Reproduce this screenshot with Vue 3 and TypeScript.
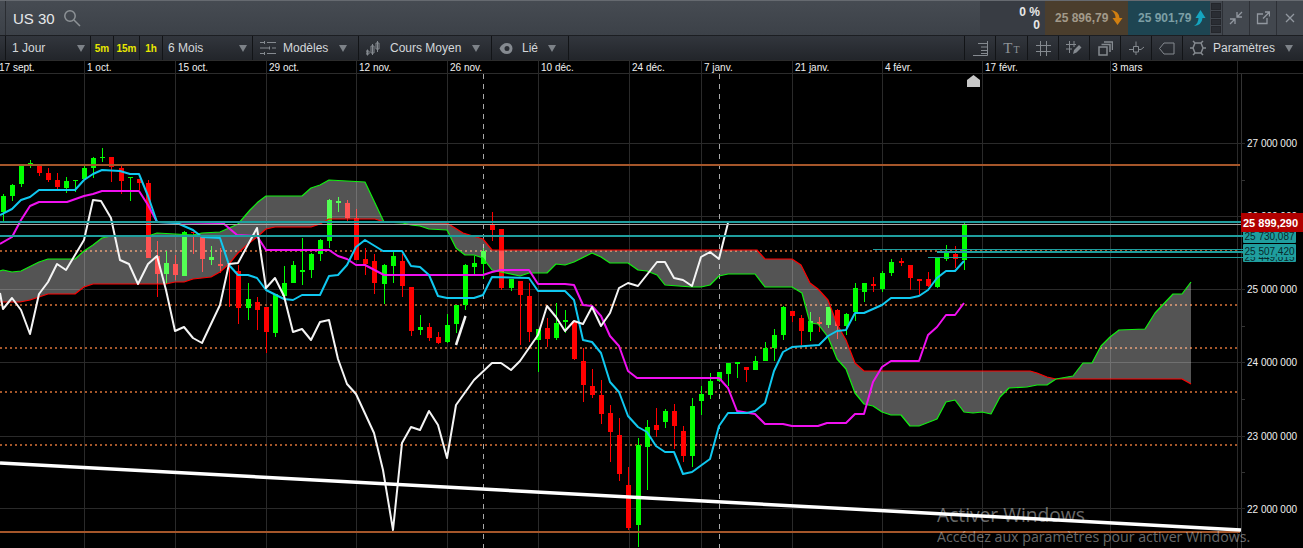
<script setup lang="ts">
type Pt = [number, number]
// x, body top, body bottom, wick top, wick bottom, colour
type Candle = [number, number, number, number, number, 'g' | 'r']

const pts = (list: Pt[]) => list.map((p) => p.join(',')).join(' ')

const candles: Candle[] = [
  [3, 196, 212, 194, 221, 'g'], [12, 185, 196, 184, 201, 'g'], [21, 166, 184, 165, 187, 'g'], [30, 163, 164, 160, 168, 'g'],
  [39, 166, 173, 165, 176, 'r'], [48, 173, 180, 168, 182, 'r'], [57, 180, 187, 173, 189, 'r'], [66, 181, 188, 177, 193, 'g'],
  [75, 180, 181, 180, 192, 'g'], [84, 168, 179, 166, 180, 'g'], [93, 158, 168, 157, 178, 'g'], [102, 157, 158, 148, 162, 'g'],
  [111, 157, 167, 157, 182, 'r'], [121, 168, 181, 166, 194, 'r'], [130, 177, 178, 177, 201, 'g'], [139, 179, 183, 179, 190, 'r'],
  [148, 183, 258, 180, 258, 'r'], [157, 256, 274, 241, 297, 'r'], [166, 263, 274, 251, 284, 'g'], [175, 264, 275, 255, 280, 'r'],
  [184, 232, 276, 231, 276, 'g'], [193, 232, 233, 232, 254, 'r'], [202, 237, 259, 236, 272, 'r'], [211, 257, 260, 246, 265, 'g'],
  [220, 264, 266, 248, 273, 'r'], [229, 263, 264, 263, 307, 'r'], [238, 271, 308, 265, 324, 'r'], [248, 299, 308, 283, 320, 'g'],
  [257, 302, 310, 297, 330, 'r'], [266, 307, 332, 307, 353, 'r'], [275, 294, 333, 294, 337, 'g'], [284, 283, 296, 266, 296, 'g'],
  [293, 265, 283, 261, 283, 'g'], [302, 270, 272, 238, 285, 'g'], [311, 254, 270, 253, 278, 'g'], [320, 240, 254, 239, 261, 'g'],
  [329, 200, 241, 199, 248, 'g'], [338, 201, 203, 197, 212, 'g'], [347, 203, 218, 200, 223, 'r'], [356, 218, 260, 209, 260, 'r'],
  [365, 259, 264, 248, 275, 'r'], [374, 261, 283, 254, 294, 'r'], [384, 265, 284, 264, 304, 'g'], [393, 256, 266, 250, 283, 'g'],
  [402, 261, 286, 254, 297, 'r'], [411, 287, 331, 287, 336, 'r'], [420, 327, 330, 315, 335, 'g'], [429, 327, 338, 323, 341, 'r'],
  [438, 337, 343, 332, 344, 'r'], [447, 325, 342, 314, 343, 'g'], [456, 305, 324, 305, 333, 'g'], [465, 265, 305, 264, 310, 'g'],
  [474, 263, 267, 256, 274, 'g'], [483, 251, 264, 248, 279, 'g'], [492, 225, 230, 212, 241, 'r'], [501, 229, 288, 229, 290, 'r'],
  [511, 279, 288, 279, 291, 'g'], [520, 281, 295, 281, 345, 'r'], [529, 296, 332, 283, 342, 'r'], [538, 329, 340, 329, 372, 'g'],
  [547, 328, 339, 318, 347, 'r'], [556, 323, 338, 303, 340, 'g'], [565, 320, 322, 310, 333, 'g'], [574, 321, 359, 321, 360, 'r'],
  [583, 361, 385, 348, 402, 'r'], [592, 386, 395, 369, 398, 'r'], [601, 395, 414, 380, 424, 'r'], [610, 413, 432, 405, 462, 'r'],
  [619, 435, 474, 418, 481, 'r'], [628, 485, 528, 467, 530, 'r'], [638, 445, 525, 438, 547, 'g'], [647, 427, 447, 420, 490, 'g'],
  [656, 425, 430, 408, 437, 'r'], [665, 411, 422, 409, 428, 'g'], [674, 411, 426, 404, 449, 'r'], [683, 431, 456, 426, 462, 'r'],
  [692, 406, 456, 398, 467, 'g'], [701, 394, 401, 386, 415, 'g'], [710, 381, 395, 373, 399, 'g'], [719, 372, 381, 372, 382, 'g'],
  [728, 363, 374, 363, 386, 'g'], [737, 362, 364, 362, 378, 'g'], [746, 367, 370, 367, 382, 'r'], [755, 361, 370, 356, 370, 'g'],
  [765, 348, 361, 342, 361, 'g'], [774, 335, 348, 329, 361, 'g'], [783, 307, 335, 306, 340, 'g'], [792, 311, 316, 311, 322, 'r'],
  [801, 318, 331, 315, 345, 'r'], [810, 321, 332, 312, 341, 'g'], [819, 322, 324, 317, 332, 'r'], [828, 307, 325, 307, 328, 'g'],
  [837, 310, 326, 309, 339, 'r'], [846, 314, 326, 313, 335, 'g'], [855, 288, 312, 283, 321, 'g'], [864, 283, 292, 283, 302, 'g'],
  [873, 284, 286, 277, 292, 'r'], [882, 273, 289, 271, 292, 'g'], [891, 262, 273, 259, 276, 'g'], [901, 261, 263, 258, 266, 'r'],
  [910, 265, 278, 265, 290, 'r'], [919, 279, 281, 279, 295, 'r'], [928, 279, 286, 272, 287, 'r'], [937, 258, 287, 258, 288, 'g'],
  [946, 252, 259, 245, 261, 'g'], [955, 254, 259, 246, 268, 'r'], [964, 225, 260, 223, 270, 'g']
]

const green: Pt[] = [
  [0, 271], [3, 270], [12, 272], [21, 271], [39, 262], [48, 259], [75, 259], [84, 251], [93, 245], [102, 238], [111, 236], [148, 236],
  [157, 233], [175, 234], [193, 235], [202, 233], [220, 232], [229, 228], [238, 224], [250, 210], [258, 202], [266, 196], [302, 196],
  [311, 188], [320, 185], [329, 180], [365, 182], [384, 222], [403, 223], [411, 225], [420, 226], [429, 229], [447, 230], [456, 248],
  [465, 255], [474, 255], [483, 258], [492, 270], [501, 272], [520, 276], [529, 273], [547, 273], [556, 264], [565, 265], [574, 262],
  [592, 253], [601, 257], [610, 263], [628, 263], [638, 270], [647, 271], [657, 275], [665, 285], [692, 287], [701, 287], [710, 285],
  [719, 276], [728, 274], [755, 274], [765, 287], [792, 287], [802, 293], [810, 323], [818, 324], [828, 337], [837, 359], [846, 369],
  [855, 393], [864, 404], [873, 406], [882, 412], [891, 415], [901, 415], [910, 426], [919, 426], [937, 419], [946, 402], [955, 400],
  [964, 412], [973, 413], [982, 412], [991, 414], [1000, 397], [1009, 388], [1027, 387], [1037, 385], [1047, 385], [1056, 379],
  [1073, 376], [1083, 363], [1092, 363], [1101, 346], [1110, 337], [1119, 330], [1145, 329], [1155, 313], [1173, 294], [1182, 294], [1191, 282]
]

const red: Pt[] = [
  [0, 302], [20, 302], [30, 300], [39, 297], [48, 294], [75, 294], [84, 287], [93, 284], [166, 284], [175, 282], [184, 282], [193, 279],
  [211, 277], [220, 272], [229, 264], [238, 253], [248, 244], [257, 237], [266, 229], [275, 227], [311, 227], [320, 224], [329, 219],
  [375, 219], [384, 222], [447, 223], [463, 233], [483, 239], [492, 250], [757, 250], [765, 259], [792, 259], [801, 265], [810, 283],
  [818, 289], [828, 300], [837, 324], [846, 340], [855, 363], [864, 371], [1030, 371], [1037, 373], [1047, 377], [1056, 379], [1182, 379], [1191, 384]
]

const cloud = pts([...green, ...[...red].reverse()])

const cyan: Pt[] = [
  [0, 215], [12, 209], [21, 200], [30, 197], [39, 190], [75, 190], [84, 180], [93, 174], [102, 170], [120, 171], [130, 174], [139, 174],
  [148, 196], [157, 222], [177, 223], [193, 230], [202, 237], [220, 238], [229, 265], [238, 275], [248, 275], [257, 278], [266, 290],
  [284, 299], [293, 300], [302, 295], [320, 295], [329, 276], [338, 275], [347, 265], [356, 247], [365, 240], [383, 251], [402, 251],
  [411, 266], [420, 267], [429, 275], [438, 296], [447, 298], [474, 298], [483, 295], [492, 277], [529, 278], [538, 291], [565, 291],
  [574, 300], [583, 340], [592, 342], [601, 353], [610, 382], [619, 392], [628, 416], [638, 427], [647, 432], [656, 446], [665, 452],
  [674, 452], [683, 474], [692, 472], [710, 459], [719, 426], [728, 413], [747, 413], [755, 411], [765, 403], [774, 371], [783, 352],
  [792, 347], [819, 345], [828, 336], [837, 331], [846, 330], [855, 313], [864, 313], [882, 305], [891, 298], [910, 298], [919, 296],
  [928, 290], [937, 278], [946, 271], [955, 271], [964, 261]
]

const magenta: Pt[] = [
  [0, 244], [12, 237], [21, 220], [30, 206], [39, 202], [67, 202], [84, 196], [93, 194], [102, 191], [139, 191], [148, 205], [157, 222],
  [223, 223], [237, 235], [257, 236], [266, 250], [329, 250], [338, 256], [347, 259], [356, 265], [365, 265], [384, 275], [483, 275],
  [492, 272], [501, 270], [529, 270], [538, 284], [565, 284], [574, 285], [583, 305], [592, 306], [601, 316], [610, 336], [619, 346],
  [628, 371], [637, 378], [719, 378], [728, 388], [737, 411], [755, 414], [765, 424], [783, 424], [792, 426], [818, 426], [827, 423],
  [846, 423], [855, 414], [864, 414], [873, 382], [882, 367], [891, 361], [919, 361], [928, 335], [937, 327], [946, 315], [955, 315], [964, 303]
]

const white: Pt[] = [
  [0, 293], [3, 309], [12, 298], [21, 310], [30, 334], [39, 294], [48, 282], [57, 264], [66, 270], [75, 255], [84, 240], [93, 200],
  [101, 201], [111, 218], [120, 260], [129, 264], [138, 284], [148, 264], [157, 256], [166, 290], [175, 331], [184, 327], [193, 338],
  [202, 343], [220, 305], [229, 264], [238, 263], [257, 228], [266, 288], [275, 278], [284, 296], [293, 332], [302, 329], [311, 340],
  [320, 322], [329, 320], [338, 359], [347, 384], [356, 394], [374, 433], [383, 470], [393, 530], [402, 443], [411, 427], [420, 430],
  [429, 411], [438, 425], [447, 458], [456, 405], [474, 380], [492, 363], [501, 363], [511, 370], [520, 361], [538, 335], [547, 306],
  [556, 317], [565, 331], [574, 321], [583, 324], [592, 307], [601, 326], [610, 313], [619, 288], [628, 283], [638, 286], [657, 262],
  [665, 262], [674, 278], [683, 280], [692, 286], [701, 257], [710, 252], [719, 259], [728, 223]
]

const gridX = [84.5, 175.5, 266.5, 356.5, 447.5, 538.5, 629.5, 701.5, 792.5, 882.5, 982.5, 1110.5, 1237.5]
const gridY = [143.5, 216.5, 289.5, 362.5, 436.5, 508.5]
const dotted = [251, 305, 348, 392, 445]
const minorTicks = [180, 253, 326, 399, 472]

const dates = [
  { x: -1, t: '17 sept.' }, { x: 87, t: '1 oct.' }, { x: 178, t: '15 oct.' }, { x: 269, t: '29 oct.' }, { x: 359, t: '12 nov.' },
  { x: 450, t: '26 nov.' }, { x: 541, t: '10 déc.' }, { x: 632, t: '24 déc.' }, { x: 704, t: '7 janv.' }, { x: 795, t: '21 janv.' },
  { x: 885, t: '4 févr.' }, { x: 985, t: '17 févr.' }, { x: 1112, t: '3 mars' }
]

const prices = [
  { y: 143, t: '27 000 000' }, { y: 216, t: '26 000 000' }, { y: 289, t: '25 000 000' },
  { y: 362, t: '24 000 000' }, { y: 436, t: '23 000 000' }, { y: 509, t: '22 000 000' }
]

// order matters, the middle label covers the other two
const tealLabels = [
  { y: 229, h: 14, ty: 240, t: '25 730,087' },
  { y: 250, h: 12, ty: 261, t: '25 449,815' },
  { y: 244, h: 13, ty: 255, t: '25 507,420' }
]
</script>

<template>
  <div class="page">
    <header class="top">
      <div class="symbol">
        <span class="name">US 30</span>
        <svg class="search" width="18" height="18" viewBox="0 0 18 18">
          <circle cx="7" cy="7" r="5.2" />
          <path d="M11 11l6 6" />
        </svg>
      </div>
      <div class="change">
        <span>0 %</span>
        <span>0</span>
      </div>
      <div class="quote sell">
        <span>25 896,79</span>
        <svg width="12" height="16" viewBox="0 0 12 16">
          <path d="M0 0Q8 1 8.500 8L11.500 8L6.500 15L1.500 8L4.500 8Q4.500 3 0 0Z" />
        </svg>
      </div>
      <div class="quote buy">
        <span>25 901,79</span>
        <svg width="12" height="16" viewBox="0 0 12 16">
          <path d="M0 16Q8 15 8.500 8L11.500 8L6.500 0L1.500 8L4.500 8Q4.500 13 0 16Z" />
        </svg>
      </div>
      <div class="depth"><i></i><i></i><i></i><i></i></div>
      <button class="win">
        <svg width="14" height="14" viewBox="0 0 14 14">
          <path d="M8 1v5h5M8 6l5-5M1 8h5v5M6 8l-5 5" />
        </svg>
      </button>
      <button class="win">
        <svg width="14" height="14" viewBox="0 0 14 14">
          <path d="M7 3H1.500v9.500H11V7M7 7.500L13 1.500M9 1h4.500v4.500" />
        </svg>
      </button>
      <button class="win">
        <svg width="12" height="12" viewBox="0 0 12 12">
          <path d="M2 2l8 8M10 2l-8 8" />
        </svg>
      </button>
    </header>

    <nav class="bar">
      <div class="group">
        <div class="cell w85"><span>1 Jour</span><b class="caret"></b></div>
        <div class="cell fast w23">5m</div>
        <div class="cell fast w26">15m</div>
        <div class="cell fast w23">1h</div>
        <div class="cell w90"><span>6 Mois</span><b class="caret"></b></div>
        <div class="cell w106">
          <svg class="ico" width="16" height="14" viewBox="0 0 16 14">
            <path d="M0 1.500h4M7 1.500h9M4.500 0v3M0 7h9M12 7h4M9.500 5.500v3M0 12.500h4M7 12.500h9M4.500 11v3" />
          </svg>
          <span class="gap7">Modèles</span><b class="caret"></b>
        </div>
        <div class="cell w133">
          <svg class="ico" width="14" height="15" viewBox="0 0 14 15">
            <path d="M1.500 8.500v6M0 10h3v3H0zM6.500 3v11M5 5h3v7H5zM11.500 0v11M10 2h3v6h-3z" />
          </svg>
          <span class="gap10">Cours Moyen</span><b class="caret"></b>
        </div>
        <div class="cell w78">
          <svg width="15" height="13" viewBox="0 0 15 13">
            <path class="eye" d="M0.500 6.500Q3 1 8 1A5.500 5.500 0 1 1 8 12Q3 12 0.500 6.500ZM8 4A2.500 2.500 0 1 0 8 9A2.500 2.500 0 1 0 8 4Z" />
          </svg>
          <span class="gap8">Lié</span><b class="caret"></b>
        </div>
      </div>
      <div class="group">
        <div class="cell w31 tool">
          <svg class="ico" width="15" height="15" viewBox="0 0 15 15">
            <path d="M14.500 0v14.500H0M5 2.500h9M8 6h6M8 9.500h6M8 12.500h6" />
          </svg>
        </div>
        <div class="cell w32 tool tt"><span class="big">T</span><span class="small">T</span></div>
        <div class="cell w31 tool">
          <svg class="ico" width="15" height="15" viewBox="0 0 15 15">
            <path d="M4.500 0v15M10.500 0v15M0 4.500h15M0 10.500h15" />
          </svg>
        </div>
        <div class="cell w31 tool">
          <svg class="ico" width="16" height="15" viewBox="0 0 16 15">
            <path d="M3.500 0v12M8 0v6M0 3.500h10M0 8h6" />
            <path class="solid" d="M8 9l5-5 2.500 2.500-5 5zM7 13l1-4 2.500 2.500z" />
          </svg>
        </div>
        <div class="cell w31 tool">
          <svg class="ico thick" width="15" height="15" viewBox="0 0 15 15">
            <path d="M1 6h8v8H1zM3.500 3.500H12V11M6 1h8.500v8" />
          </svg>
        </div>
        <div class="cell w31 tool">
          <svg class="ico" width="15" height="14" viewBox="0 0 15 14">
            <path d="M0 8.500h4M9 8.500h3L15 6M7 0.500v5M7 11v3M4.500 5.500h5v5.500h-5z" />
          </svg>
        </div>
        <div class="cell w31 tool">
          <svg class="ico" width="16" height="13" viewBox="0 0 16 13">
            <path d="M15 1H5L0.500 6.500 5 12h10z" />
          </svg>
        </div>
        <div class="cell w121">
          <svg class="ico thick" width="16" height="16" viewBox="0 0 16 16">
            <path d="M5 3h6l2 5-2 5H5L3 8zM5 3L3 1M11 3l2-2M13 8h3M3 8H0M5 13l-2 2M11 13l2 2" />
          </svg>
          <span class="gap7">Paramètres</span><b class="caret"></b>
        </div>
      </div>
    </nav>

    <svg class="chart" width="1303" height="488" viewBox="0 60 1303 488">
      <rect x="0" y="60" width="1303" height="488" fill="#000" />
      <path d="M0 60.500H1303M0 73.500H1303" stroke="#2c2c2c" />

      <line v-for="x in gridX" :key="x" :x1="x" :x2="x" y1="60" y2="548" stroke="#2a2a2a" />
      <line x1="1241.500" x2="1241.500" y1="74" y2="548" stroke="#333" />
      <line v-for="y in gridY" :key="y" x1="0" x2="1245" :y1="y" :y2="y" stroke="#2a2a2a" />
      <line v-for="y in minorTicks" :key="y" x1="1241" x2="1245" :y1="y + 0.5" :y2="y + 0.5" stroke="#333" />

      <line v-for="y in dotted" :key="y" x1="0" x2="1240" :y1="y" :y2="y" class="dots" />
      <line x1="483.500" x2="483.500" y1="74" y2="548" class="dash" />
      <line x1="719.500" x2="719.500" y1="74" y2="548" class="dash" />

      <g v-for="c in candles" :key="c[0]" :fill="c[5] === 'g' ? '#00ff00' : '#ff0000'">
        <rect :x="c[0]" :y="c[3]" width="1" :height="c[4] - c[3]" />
        <rect :x="c[0] - 2" :y="c[1]" width="5" :height="c[2] - c[1]" />
      </g>

      <polygon :points="cloud" fill="rgba(255,255,255,0.33)" />
      <polyline :points="pts(red)" class="line" stroke="#ff0000" stroke-width="1.200" />
      <polyline :points="pts(green)" class="line" stroke="#10f010" stroke-width="1.200" />
      <polyline :points="pts(magenta)" class="line" stroke="#f010f0" stroke-width="2" />
      <polyline :points="pts(cyan)" class="line" stroke="#10c8f0" stroke-width="2" />
      <polyline :points="pts(white)" class="line" stroke="#f4f4f4" stroke-width="2" />
      <line x1="456" y1="345" x2="465.500" y2="316" stroke="#f4f4f4" stroke-width="2.500" />

      <rect x="0" y="164" width="1240" height="2" fill="#a5562a" />
      <rect x="0" y="531" width="1240" height="2" fill="#a5562a" />
      <line x1="0" y1="463" x2="1241" y2="530" stroke="#fff" stroke-width="3.500" />

      <rect x="0" y="221" width="1243" height="2" fill="#1f9e9e" />
      <rect x="0" y="224" width="1243" height="1" fill="#aaa" />
      <rect x="0" y="235" width="1243" height="2" fill="#1f9e9e" />
      <rect x="873" y="249" width="370" height="1" fill="#1f9e9e" />
      <rect x="937" y="251" width="306" height="2" fill="#1f9e9e" />
      <rect x="928" y="257" width="315" height="1" fill="#1f9e9e" />

      <polygon points="967,87 967,80 973.500,75 980,80 980,87" fill="#c8c8c8" />

      <text v-for="d in dates" :key="d.t" :x="d.x" y="71" class="date">{{ d.t }}</text>
      <text v-for="p in prices" :key="p.y" x="1247" :y="p.y + 4" class="price">{{ p.t }}</text>

      <g v-for="l in tealLabels" :key="l.t">
        <rect x="1243" :y="l.y" width="53" :height="l.h" rx="1" fill="#1f9e9e" />
        <text x="1244.500" :y="l.ty" class="teal">{{ l.t }}</text>
      </g>
      <rect x="1241" y="213" width="62" height="19" fill="#b00000" />
      <text x="1243" y="227" class="last">25 899,290</text>
    </svg>

    <div class="activate">
      <div class="title">Activer Windows</div>
      <div class="hint">Accédez aux paramètres pour activer Windows.</div>
    </div>
  </div>
</template>

<style scoped>
.page {
  position: relative;
  width: 1303px;
  height: 548px;
  overflow: hidden;
  background: #000;
  font-family: "Liberation Sans", Arial, sans-serif;
}

.top {
  display: flex;
  box-sizing: content-box;
  height: 34px;
  border-top: 1px solid #666a70;
  border-bottom: 1px solid #1c1e22;
  background: linear-gradient(#464b52, #3c4148);
}

.symbol {
  flex: 1;
  display: flex;
  align-items: center;
  margin-left: 5px;
  padding-left: 7px;
  border-left: 1px solid #2a2d32;
  color: #e6e8ea;
  font-size: 15px;
}

.search {
  margin-left: 8px;
  fill: none;
  stroke: #8d9296;
  stroke-width: 1.500;
}

.change {
  width: 60px;
  padding: 1px 5px 0 0;
  display: flex;
  flex-direction: column;
  justify-content: center;
  align-items: flex-end;
  background: #383c43;
  color: #e8e8e8;
  font-size: 12px;
  font-weight: bold;
  line-height: 13px;
}

.quote {
  display: flex;
  align-items: center;
  gap: 3px;
  font-size: 12px;
  font-weight: bold;
  box-sizing: border-box;
  padding-left: 10px;
}

.sell {
  width: 83px;
  background: #4b3e2d;
  color: #a29a8a;
  fill: #d17f10;
}

.buy {
  width: 82px;
  background: #1e4552;
  color: #7c9fa5;
  fill: #15a5c0;
}

.depth {
  width: 12px;
  padding: 2px 1px;
  box-sizing: border-box;
  display: flex;
  flex-direction: column;
  gap: 1px;
  background: #42474e;
}

.depth i {
  flex: 1;
  background: #2a2d33;
  border: 1px solid #24262b;
}

.win {
  width: 27px;
  padding: 0;
  border: 0;
  border-left: 1px solid #2d3036;
  background: #42474e;
  display: flex;
  align-items: center;
  justify-content: center;
}

.win svg {
  fill: none;
  stroke: #9298a0;
  stroke-width: 1.300;
}

.bar {
  display: flex;
  justify-content: space-between;
  height: 24px;
  padding-left: 5px;
  background: linear-gradient(#32363d, #22252a);
  color: #d4d7da;
  font-size: 12px;
}

.group {
  display: flex;
}

.cell {
  box-sizing: border-box;
  display: flex;
  align-items: center;
  padding: 0 8px 0 7px;
  border-left: 1px solid #121417;
}

.group:first-child .cell:last-child {
  border-right: 1px solid #121417;
}

.w23 { width: 23px; }
.w26 { width: 26px; }
.w31 { width: 31px; }
.w32 { width: 32px; }
.w78 { width: 78px; padding-right: 12px; }
.w85 { width: 85px; padding: 0 5px 0 6px; }
.w90 { width: 90px; padding: 0 5px; }
.w106 { width: 106px; padding-right: 11px; }
.w121 { width: 121px; padding-right: 10px; }
.w133 { width: 133px; padding-right: 11px; }

.fast {
  justify-content: center;
  padding: 0;
  color: #e8e800;
  font-size: 10px;
  font-weight: bold;
}

.tool {
  justify-content: center;
  padding: 0;
}

.caret {
  margin-left: auto;
  width: 0;
  height: 0;
  border-left: 4px solid transparent;
  border-right: 4px solid transparent;
  border-top: 7px solid #7d8288;
}

.ico {
  flex: none;
  fill: none;
  stroke: #858a90;
  stroke-width: 1;
}

.thick {
  stroke-width: 1.500;
}

.solid {
  fill: #858a90;
  stroke: none;
}

.eye {
  fill: #858a90;
  fill-rule: evenodd;
}

.gap7 {
  margin-left: 7px;
}

.gap8 {
  margin-left: 8px;
}

.gap10 {
  margin-left: 10px;
}

.tt {
  align-items: baseline;
  padding-top: 4px;
  color: #8e9398;
  font-family: "Liberation Serif", serif;
}

.tt .big {
  font-size: 15px;
}

.tt .small {
  font-size: 10px;
  margin-left: 1px;
}

.chart {
  display: block;
}

.line {
  fill: none;
  stroke-linejoin: round;
}

.dots {
  stroke: #a5562a;
  stroke-width: 2;
  stroke-dasharray: 2 3;
}

.dash {
  stroke: #a8a8a8;
  stroke-dasharray: 5 5;
}

.date,
.price {
  fill: #f0f0f0;
  font-size: 10px;
}

.teal {
  fill: #08282a;
  font-size: 10px;
}

.last {
  fill: #fff;
  font-size: 11px;
  font-weight: bold;
}

.activate {
  position: absolute;
  left: 937px;
  top: 502px;
  font-family: "Open Sans", sans-serif;
  color: rgba(255, 255, 255, 0.42);
  white-space: nowrap;
}

.title {
  font-size: 19.200px;
  line-height: 25px;
}

.hint {
  font-size: 14.200px;
  line-height: 19px;
}
</style>

<style>
body {
  background: #000;
  overflow: hidden;
}
</style>
